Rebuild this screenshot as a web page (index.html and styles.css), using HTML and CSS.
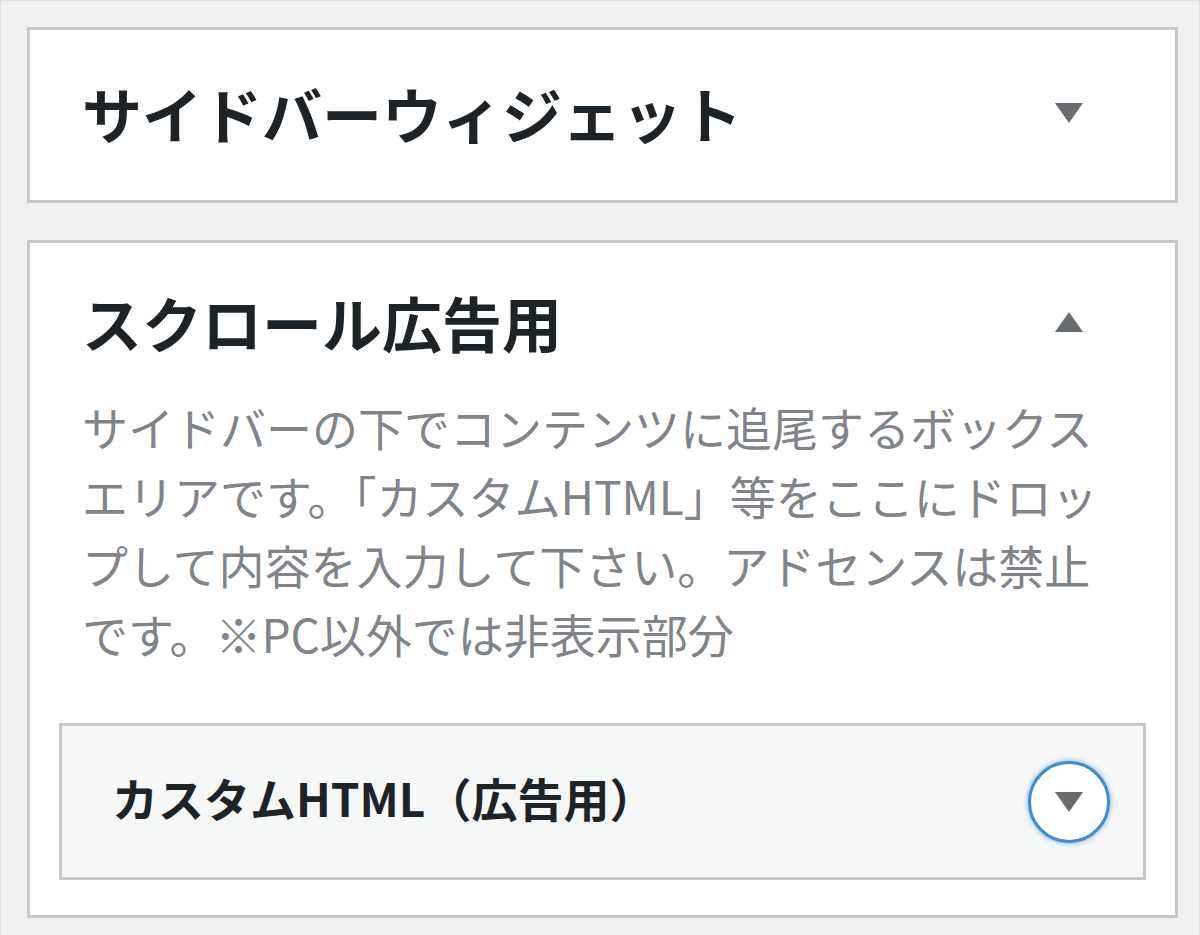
FILE: index.html
```html
<!DOCTYPE html>
<html lang="ja">
<head>
    <meta charset="UTF-8">
    <meta name="viewport" content="width=device-width, initial-scale=1.0">
    <title>ウィジェット</title>
    <link rel="stylesheet" href="styles.css">
</head>
<body>

<div class="widgets">

    <div class="area">
        <div class="area-head">
            <h2>サイドバーウィジェット</h2>
            <button class="toggle"><span class="arrow down"></span></button>
        </div>
    </div>

    <div class="area open">
        <div class="area-head">
            <h2>スクロール広告用</h2>
            <button class="toggle"><span class="arrow up"></span></button>
        </div>
        <p class="descp">サイドバーの下でコンテンツに追尾するボックスエリアです。「カスタムHTML」等をここにドロップして内容を入力して下さい。アドセンスは禁止です。※PC以外では非表示部分</p>

        <div class="widget">
            <h3>カスタムHTML（広告用）</h3>
            <button class="toggle focus"><span class="arrow down"></span></button>
        </div>
    </div>

</div>

</body>
</html>
```

FILE: styles.css
```css
*{
    margin: 0;
    padding: 0;
    box-sizing: border-box;
}

body{
    background-color: #f0f0f1;
    font-family: "Noto Sans CJK JP", "Noto Sans", sans-serif;
    color: #1d2327;
}

.widgets{
    min-height: 935px;
    border: 1px solid #e1e1e3;
    padding: 26px 21px 0 26px;
}

.area{
    background-color: #fff;
    border: 3px solid #c8c9cc;
    margin-bottom: 37px;
}

.area-head{
    display: flex;
    justify-content: space-between;
    align-items: center;
    height: 170px;
    padding: 0 65px 4px 52px;
}

.area h2{
    font-size: 60px;
    font-weight: 700;
    line-height: 70px;
}

.open .area-head{
    height: auto;
    padding-top: 38px;
    padding-bottom: 0;
}

.open{
    padding-bottom: 35px;
}

.toggle{
    display: flex;
    justify-content: center;
    align-items: center;
    flex-shrink: 0;
    width: 82px;
    height: 82px;
    border: 3px solid transparent;
    border-radius: 50%;
    background: none;
}

.arrow{
    width: 0;
    height: 0;
    border-left: 14px solid transparent;
    border-right: 14px solid transparent;
}

.arrow.down{
    border-top: 20px solid #686c71;
}

.arrow.up{
    border-bottom: 20px solid #686c71;
}

.descp{
    margin-top: 29px;
    padding: 0 58px 0 52px;
    font-size: 46px;
    line-height: 69px;
    color: #808388;
}

.widget{
    display: flex;
    justify-content: space-between;
    align-items: center;
    height: 157px;
    margin: 55px 29px 0 29px;
    padding: 0 33px 0 50px;
    background-color: #f6f7f7;
    border: 3px solid #c8c9cc;
}

.widget h3{
    font-size: 46px;
    font-weight: 700;
    margin-bottom: 10px;
}

.toggle.focus{
    background-color: #fff;
    border-color: #3f8bd0;
    box-shadow: 0 0 4px 1px rgba(53, 130, 196, 0.5);
}
```
